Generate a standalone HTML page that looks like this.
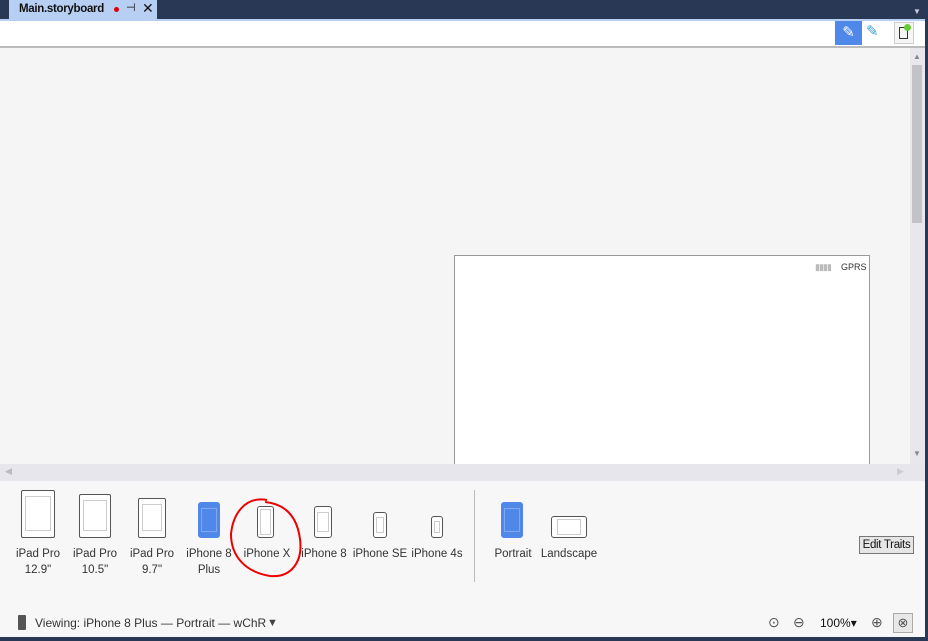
<!DOCTYPE html>
<html><head><style>
*{margin:0;padding:0;box-sizing:border-box}
body{width:928px;height:641px;overflow:hidden;background:#293955;font-family:"Liberation Sans",sans-serif;position:relative}
.a{position:absolute}
.dev{position:absolute;border:1.5px solid #555;border-radius:2px;background:#fff}
.dev i{position:absolute;left:3px;right:3px;border:1px solid #ccc}
.blue{background:#4f88e8;border-color:#4f88e8}
.blue i{border-color:#7fa8f0}
.lbl{position:absolute;font-size:11.5px;color:#333;text-align:center;line-height:16px;white-space:nowrap}
</style></head><body>
<div class="a" style="left:9px;top:0;width:148px;height:19px;background:#b7cff2"></div>
<div class="a" style="left:19px;top:3px;font-size:11.5px;font-weight:bold;color:#111;letter-spacing:-0.3px">Main.storyboard</div>
<div class="a" style="left:114px;top:7px;width:5px;height:5px;border-radius:50%;background:#d00"></div>
<div class="a" style="left:126px;top:1px;font-size:11px;color:#111">⊣</div>
<div class="a" style="left:142px;top:0px;font-size:14px;color:#111">✕</div>
<div class="a" style="left:913px;top:7px;font-size:8px;color:#ccd">▼</div>
<div class="a" style="left:0;top:19px;width:925px;height:2px;background:#b7cff2"></div>
<div class="a" style="left:0;top:21px;width:925px;height:25px;background:#fff"></div>
<div class="a" style="left:835px;top:21px;width:27px;height:24px;background:#4f88e8;color:#fff;font-size:15px;text-align:center;line-height:24px">✎</div>
<div class="a" style="left:866px;top:22px;font-size:15px;color:#3aa0d8">✎</div>
<div class="a" style="left:894px;top:22px;width:20px;height:22px;border:1px solid #ccc;background:#f5f5f5"></div>
<div class="a" style="left:899px;top:27px;width:9px;height:12px;border:1px solid #333"></div>
<div class="a" style="left:904px;top:24px;width:7px;height:7px;border-radius:50%;background:#6c3"></div>
<div class="a" style="left:0;top:46px;width:925px;height:2px;background:#bbb"></div>
<div class="a" style="left:0;top:48px;width:910px;height:416px;background:#f5f5f5"></div>
<div class="a" style="left:910px;top:48px;width:15px;height:416px;background:#e8e8ec"></div>
<div class="a" style="left:913px;top:52px;font-size:8px;color:#888">▲</div>
<div class="a" style="left:912px;top:65px;width:10px;height:158px;background:#c2c3c9"></div>
<div class="a" style="left:913px;top:449px;font-size:8px;color:#888">▼</div>
<div class="a" style="left:454px;top:255px;width:416px;height:209px;background:#fff;border:1px solid #999;border-bottom:none"></div>
<div class="a" style="left:815px;top:262px;font-size:9px;color:#bbb;letter-spacing:-1px">▮▮▮▮</div>
<div class="a" style="left:841px;top:262px;font-size:9px;color:#333">GPRS</div>
<div class="a" style="left:0;top:464px;width:925px;height:17px;background:#e6e6ec"></div>
<div class="a" style="left:5px;top:466px;font-size:9px;color:#bbb">◀</div>
<div class="a" style="left:897px;top:466px;font-size:9px;color:#ccc">▶</div>
<div class="a" style="left:0;top:481px;width:925px;height:156px;background:#f7f7f7"></div>
<div class="a" style="left:925px;top:0;width:3px;height:641px;background:#293955"></div>

<div class="dev" style="left:21px;top:490px;width:34px;height:48px"><i style="top:5px;bottom:6px"></i></div>
<div class="dev" style="left:79px;top:494px;width:32px;height:44px"><i style="top:5px;bottom:6px"></i></div>
<div class="dev" style="left:138px;top:498px;width:28px;height:40px"><i style="top:5px;bottom:6px"></i></div>
<div class="dev blue" style="left:198px;top:502px;width:22px;height:36px;border-radius:3px"><i style="top:5px;bottom:5px;left:2px;right:2px"></i></div>
<div class="dev" style="left:257px;top:506px;width:17px;height:32px;border-radius:3px"><i style="top:2px;bottom:2px;left:2px;right:2px"></i></div>
<div class="dev" style="left:314px;top:506px;width:18px;height:32px;border-radius:3px"><i style="top:5px;bottom:5px;left:2px;right:2px"></i></div>
<div class="dev" style="left:373px;top:512px;width:14px;height:26px;border-radius:3px"><i style="top:4px;bottom:4px;left:2px;right:2px"></i></div>
<div class="dev" style="left:431px;top:516px;width:12px;height:22px;border-radius:3px"><i style="top:4px;bottom:4px;left:2px;right:2px"></i></div>
<div class="dev blue" style="left:501px;top:502px;width:22px;height:36px;border-radius:3px"><i style="top:5px;bottom:5px;left:2px;right:2px"></i></div>
<div class="dev" style="left:551px;top:516px;width:36px;height:22px;border-radius:3px"><i style="top:2px;bottom:2px;left:5px;right:5px"></i></div>
<div class="a" style="left:474px;top:490px;width:1px;height:92px;background:#bbb"></div>

<div class="lbl" style="left:8px;top:546px;width:60px">iPad Pro<br>12.9"</div>
<div class="lbl" style="left:65px;top:546px;width:60px">iPad Pro<br>10.5"</div>
<div class="lbl" style="left:122px;top:546px;width:60px">iPad Pro<br>9.7"</div>
<div class="lbl" style="left:179px;top:546px;width:60px">iPhone 8<br>Plus</div>
<div class="lbl" style="left:237px;top:546px;width:60px">iPhone X</div>
<div class="lbl" style="left:294px;top:546px;width:60px">iPhone 8</div>
<div class="lbl" style="left:350px;top:546px;width:60px">iPhone SE</div>
<div class="lbl" style="left:407px;top:546px;width:60px">iPhone 4s</div>
<div class="lbl" style="left:483px;top:546px;width:60px">Portrait</div>
<div class="lbl" style="left:539px;top:546px;width:60px">Landscape</div>
<svg class="a" style="left:225px;top:494px" width="85" height="86"><path d="M42 6 C20 2 8 20 6 40 C6 62 20 78 45 82 C66 84 78 68 75 45 C72 22 60 10 40 8" fill="none" stroke="#e00" stroke-width="2"/></svg>

<div class="a" style="left:859px;top:536px;width:55px;height:18px;border:1px solid #777;background:#e6e6e6;font-size:11.5px;line-height:16px;text-align:center;color:#111;white-space:nowrap;letter-spacing:-0.3px">Edit Traits</div>
<div class="a" style="left:18px;top:615px;width:8px;height:15px;background:#555;border-radius:1px"></div>
<div class="a" style="left:35px;top:616px;font-size:12px;color:#333">Viewing: iPhone 8 Plus — Portrait — wChR</div>
<div class="a" style="left:267px;top:617px;font-size:11px;color:#444">▼</div>
<div class="a" style="left:768px;top:614px;font-size:14px;color:#555">⊙</div>
<div class="a" style="left:793px;top:614px;font-size:14px;color:#555">⊖</div>
<div class="a" style="left:820px;top:616px;font-size:12px;color:#111">100%▾</div>
<div class="a" style="left:871px;top:614px;font-size:14px;color:#555">⊕</div>
<div class="a" style="left:893px;top:613px;width:20px;height:20px;border:1px solid #aaa;background:#e8e8e8;font-size:13px;text-align:center;line-height:18px;color:#555">⊗</div>
<div class="a" style="left:0;top:637px;width:928px;height:4px;background:#293955"></div>
</body></html>
